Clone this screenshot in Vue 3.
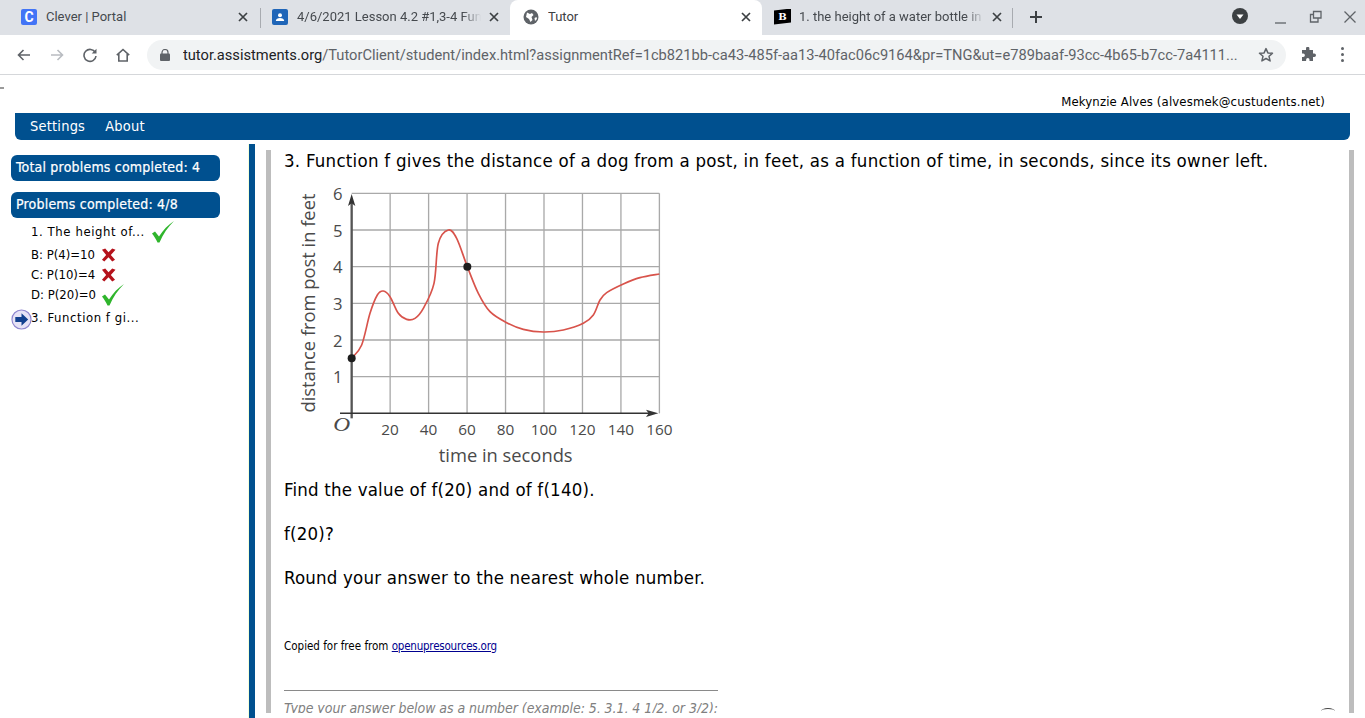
<script setup>
const curvePts = [[185,535],[215,495],[240,400],[262,345],[280,333],[300,350],[325,400],[350,418],[375,415],[400,385],[432,310],[445,190],[475,150],[500,175],[532,260],[565,340],[600,395],[650,428],[700,448],[760,456],[820,450],[880,430],[910,405],[930,360],[950,338],[1000,312],[1050,293],[1108,282]]
function smooth(p) {
  let d = `M${p[0][0]} ${p[0][1]}`
  for (let i = 0; i < p.length - 1; i++) {
    const a = p[Math.max(i - 1, 0)], b = p[i], c = p[i + 1], e = p[Math.min(i + 2, p.length - 1)]
    d += ` C${b[0] + (c[0] - a[0]) / 6} ${b[1] + (c[1] - a[1]) / 6} ${c[0] - (e[0] - b[0]) / 6} ${c[1] - (e[1] - b[1]) / 6} ${c[0]} ${c[1]}`
  }
  return d
}
const curve = smooth(curvePts)
const xLines = [1,2,3,4,5,6,7,8].map(i => 185 + i * 115.4)
const yLines = [0,1,2,3,4,5].map(i => 40 + i * 110)
const xLabels = [20,40,60,80,100,120,140,160]
const problems = [
  { text: '1. The height of...', mark: 'ok', cls: 'first' },
  { text: 'B: P(4)=10', mark: 'no' },
  { text: 'C: P(10)=4', mark: 'no' },
  { text: 'D: P(20)=0', mark: 'ok' },
]
</script>

<template>
  <div class="screen">
    <div class="tabstrip">
      <div class="tab t1">
        <span class="fav clever">C</span><span class="title">Clever | Portal</span>
        <svg class="x" viewBox="0 0 10 10"><path d="M1 1L9 9M9 1L1 9"/></svg>
      </div>
      <i class="sep"></i>
      <div class="tab t2">
        <svg class="favsvg" viewBox="0 0 16 16"><rect width="16" height="16" rx="2" fill="#1f65b8"/><circle cx="8" cy="6.2" r="2" fill="#fff"/><path d="M3.8 12c0-2 2-3 4.2-3s4.200 1 4.200 3z" fill="#fff"/></svg>
        <span class="title fade">4/6/2021 Lesson 4.2 #1,3-4 Func</span>
        <svg class="x" viewBox="0 0 10 10"><path d="M1 1L9 9M9 1L1 9"/></svg>
      </div>
      <div class="tab active">
        <svg class="favsvg" viewBox="0 0 16 16"><circle cx="8" cy="8" r="7.500" fill="#5f6368"/><path d="M4 3.500l3 1.500 2-1 1.500 2-2 2 1 3-2 2-1.500-3-3-2zM11.500 9l2-1 .5 2-2 2z" fill="#fff"/></svg>
        <span class="title">Tutor</span>
        <svg class="x" viewBox="0 0 10 10"><path d="M1 1L9 9M9 1L1 9"/></svg>
      </div>
      <div class="tab t4">
        <span class="fav brainly">B</span>
        <span class="title fade">1. the height of a water bottle in a</span>
        <svg class="x" viewBox="0 0 10 10"><path d="M1 1L9 9M9 1L1 9"/></svg>
      </div>
      <i class="sep"></i>
      <svg class="plus" viewBox="0 0 14 14"><path d="M7 1V13M1 7H13"/></svg>
      <div class="spring"></div>
      <svg class="circle-down" viewBox="0 0 16 16"><circle cx="8" cy="8" r="8" fill="#3c4043"/><path d="M4.500 6.500h7L8 11z" fill="#fff"/></svg>
      <svg class="winbtn min" viewBox="0 0 14 14"><path d="M1 12H12"/></svg>
      <svg class="winbtn" viewBox="0 0 14 14"><path d="M4.500 1.500H12V8H4.500zM4.500 4.500H1.500V12H9V8"/></svg>
      <svg class="winbtn last" viewBox="0 0 14 14"><path d="M1.500 1.500L12.500 12.500M12.500 1.500L1.500 12.500"/></svg>
    </div>

    <div class="toolbar">
      <svg class="navbtn" viewBox="0 0 16 16"><path d="M14 8H2.500M7.500 3L2.500 8L7.500 13"/></svg>
      <svg class="navbtn dim" viewBox="0 0 16 16"><path d="M2 8H13.500M8.500 3L13.500 8L8.500 13"/></svg>
      <svg class="navbtn" viewBox="0 0 16 16"><path d="M13.300 5.500A6 6 0 1 0 14 9"/><path class="fill" d="M14.500 1.800V6.600H9.700z"/></svg>
      <svg class="navbtn" viewBox="0 0 16 16"><path d="M1.800 8.200L8 2.500L14.200 8.200M3.800 7V14H12.200V7"/></svg>
      <div class="omnibox">
        <svg class="lock" viewBox="0 0 10 12"><path d="M2 5V3.500a3 3 0 0 1 6 0V5" fill="none" stroke="#5f6368" stroke-width="1.200"/><rect y="4.500" width="10" height="7.500" rx="1" fill="#5f6368"/></svg>
        <span class="url"><b>tutor.assistments.org</b>/TutorClient/student/index.html?assignmentRef=1cb821bb-ca43-485f-aa13-40fac06c9164&amp;pr=TNG&amp;ut=e789baaf-93cc-4b65-b7cc-7a4111...</span>
        <svg class="star" viewBox="0 0 16 16"><path d="M8 1.600l1.900 4.300 4.600.4-3.500 3 1.100 4.600L8 11.500l-4.100 2.400L5 9.300l-3.500-3 4.600-.4z"/></svg>
      </div>
      <svg class="puzzle" viewBox="0 0 16 16"><path d="M6 1.500a1.700 1.700 0 0 1 3.400 0V3H13v3.600h1.300a1.700 1.700 0 0 1 0 3.400H13v4H9.500v-1.300a1.700 1.700 0 0 0-3.400 0V14H2v-4h1.200a1.700 1.700 0 0 0 0-3.400H2V3h4z" fill="#5f6368"/></svg>
      <div class="dots"><i></i><i></i><i></i></div>
    </div>

    <div class="page">
      <i class="tick"></i>
      <div class="user">Mekynzie Alves (alvesmek@custudents.net)</div>
      <div class="nav"><span>Settings</span><span>About</span></div>

      <div class="main">
        <aside class="side">
          <div class="pill">Total problems completed: 4</div>
          <div class="pill second">Problems completed: 4/8</div>
          <ul class="plist">
            <li v-for="p in problems" :key="p.text" :class="p.cls">
              <span>{{ p.text }}</span>
              <svg v-if="p.mark === 'ok'" class="ok" viewBox="0 0 24 22"><path d="M1 12.500L4 10.500L8 15.500C12 9 17 4 23 0C17 6 12 13 8.500 21.500H6.500C5 18 3 15 1 12.500z" fill="#2fb52c"/></svg>
              <svg v-else class="no" viewBox="0 0 16 15"><path d="M1 2L4.500 .500L8 4.500L12 .500L15.500 2L10.500 7.500L15 12.500L12 14.500L8 10L3.500 14.500L1 12.500L5.500 7.500z" fill="#b5121b"/></svg>
            </li>
            <li class="current">
              <svg class="arrow" viewBox="0 0 22 22"><circle cx="11" cy="11" r="10" fill="#e6e2f6" stroke="#8f86cf" stroke-width="1.200"/><path d="M4.500 8.500H11V4.500L18 11L11 17.500V13.500H4.500z" fill="#12408f"/></svg>
              <span>3. Function f gi...</span>
            </li>
          </ul>
        </aside>

        <div class="stripe"></div>

        <div class="content">
          <div class="inner">
            <p class="q">3. Function f gives the distance of a dog from a post, in feet, as a function of time, in seconds, since its owner left.</p>
            <svg class="graph" viewBox="0 0 1200 870">
              <g class="grid">
                <line v-for="x in xLines" :key="x" :x1="x" :x2="x" y1="40" y2="700"/>
                <line v-for="y in yLines" :key="y" x1="185" x2="1108" :y1="y" :y2="y"/>
              </g>
              <path class="axis-y" d="M185 715V60"/>
              <path class="head" d="M185 42L196 78L185 70L174 78z"/>
              <path class="axis-x" d="M150 700H1085"/>
              <path class="head" d="M1105 700L1068 689L1076 700L1068 711z"/>
              <path class="curve" :d="curve"/>
              <circle cx="185" cy="535" r="12" fill="#1d1d1d"/>
              <circle cx="532" cy="260" r="12" fill="#1d1d1d"/>
              <g class="ylab">
                <text v-for="n in [6,5,4,3,2,1]" :key="n" x="143" :y="(6 - n) * 110 + 60">{{ n }}</text>
              </g>
              <text class="origin" transform="translate(130 754) scale(1.300 1)">O</text>
              <g class="xlab">
                <text v-for="(n, i) in xLabels" :key="n" :x="185 + (i + 1) * 115.4" y="765">{{ n }}</text>
              </g>
              <text class="xtitle" x="647" y="846">time in seconds</text>
              <text class="ytitle" transform="translate(76 369) rotate(-90)">distance from post in feet</text>
            </svg>
            <p class="t find">Find the value of f(20) and of f(140).</p>
            <p class="t fq">f(20)?</p>
            <p class="t round">Round your answer to the nearest whole number.</p>
            <p class="copied">Copied for free from <a href="#">openupresources.org</a></p>
            <div class="rule"></div>
            <p class="hint">Type your answer below as a number (example: 5, 3.1, 4 1/2, or 3/2):</p>
          </div>
          <div class="rightbar"></div>
          <i class="arc"></i>
        </div>
      </div>
    </div>
  </div>
</template>

<style>
html, body { margin: 0; height: 100%; overflow: hidden; background: #fff; }
</style>

<style scoped>
.screen { width: 1365px; height: 718px; overflow: hidden; display: flex; flex-direction: column; font-family: "DejaVu Sans", sans-serif; font-stretch: condensed; color: #000; }
.tabstrip { height: 35px; background: #dee1e6; display: flex; align-items: center; font-family: Roboto, sans-serif; font-stretch: normal; flex: none; }
.tab { height: 35px; display: flex; align-items: center; box-sizing: border-box; font-size: 13px; color: #45494e; flex: none; padding-bottom: 2px; }
.t1 { width: 260px; padding-left: 21px; padding-right: 12px; }
.t2 { width: 249px; padding-left: 11px; padding-right: 11px; }
.active { width: 252px; padding-left: 13px; padding-right: 11px; background: #fff; border-radius: 8px 8px 0 0; color: #3c4043; }
.t4 { width: 250px; padding-left: 12px; padding-right: 10px; }
.sep { width: 1px; height: 20px; background: #a8abb0; flex: none; }
.fav { width: 16px; height: 16px; flex: none; display: flex; align-items: center; justify-content: center; font-weight: 700; color: #fff; }
.clever { background: #4274f6; border-radius: 2px; font-size: 14px; }
.brainly { background: #000; font-size: 10px; font-family: "DejaVu Serif", serif; width: 17px; clip-path: polygon(0 12%, 100% 0, 100% 88%, 0 100%); }
.favsvg { width: 16px; height: 16px; flex: none; }
.title { margin-left: 9px; flex: 1; white-space: nowrap; overflow: hidden; min-width: 0; }
.t4 .title { margin-left: 8px; }
.fade { -webkit-mask-image: linear-gradient(to right, #000 90%, transparent 100%); mask-image: linear-gradient(to right, #000 90%, transparent 100%); }
.x { width: 10px; height: 10px; flex: none; margin-left: 8px; }
.x path { stroke: #3c4043; stroke-width: 1.700; fill: none; }
.plus { width: 14px; height: 14px; margin-left: 16px; flex: none; margin-bottom: 2px; }
.plus path { stroke: #3c4043; stroke-width: 2; fill: none; }
.spring { flex: 1; }
.circle-down { width: 16px; height: 16px; margin-right: 25px; flex: none; margin-bottom: 3px; }
.winbtn { width: 14px; height: 14px; margin-right: 20px; flex: none; margin-bottom: 2px; }
.winbtn.last { margin-right: 8px; }
.winbtn.min { margin-left: 1px; margin-right: 21px; margin-top: 2px; }
.winbtn path { stroke: #5f6368; stroke-width: 1.300; fill: none; }
.toolbar { height: 39px; border-bottom: 1px solid #d5d7da; background: #fff; flex: none; display: flex; align-items: center; padding-left: 15.500px; box-sizing: content-box; font-family: Roboto, sans-serif; font-stretch: normal; }
.navbtn { width: 16px; height: 16px; margin-right: 17px; flex: none; }
.navbtn path { stroke: #5f6368; stroke-width: 1.600; fill: none; }
.navbtn path.fill { fill: #5f6368; stroke: none; }
.navbtn.dim path { stroke: #b9bcc1; }
.omnibox { width: 1139px; height: 30px; margin-left: -0.500px; background: #f1f3f4; border-radius: 15px; display: flex; align-items: center; flex: none; padding-left: 13px; box-sizing: border-box; }
.lock { width: 10px; height: 12px; flex: none; }
.url { margin-left: 13px; font-size: 14.660px; color: #5f6368; white-space: nowrap; width: 1057px; overflow: hidden; flex: none; }
.url b { font-weight: 400; color: #202124; }
.star { width: 16px; height: 16px; margin-left: 18px; flex: none; }
.star path { stroke: #5f6368; stroke-width: 1.500; fill: none; stroke-linejoin: round; }
.puzzle { width: 16px; height: 16px; margin-left: 14px; flex: none; }
.dots { margin-left: 25px; display: flex; flex-direction: column; gap: 3px; }
.dots i { width: 3px; height: 3px; border-radius: 50%; background: #5f6368; }

.page { flex: 1; position: relative; min-height: 0; display: flex; flex-direction: column; }
.tick { position: absolute; left: 0; top: 12px; width: 4px; height: 2px; background: #9a9a9a; }
.user { height: 38px; box-sizing: border-box; padding: 18px 40px 0 0; text-align: right; font-size: 13px; line-height: 17px; flex: none; letter-spacing: .15px; }
.nav { height: 27px; margin: 0 15px; background: #00508f; border-radius: 0 0 6px 6px; color: #fff; display: flex; gap: 20px; padding: 0 0 2px 15px; box-sizing: border-box; align-items: center; font-size: 14.500px; flex: none; letter-spacing: .2px; }
.main { display: flex; flex: 1; min-height: 0; margin-top: 4px; }
.side { width: 249px; flex: none; padding: 11px 0 0 11px; box-sizing: border-box; font-size: 13px; }
.pill { width: 209px; height: 26px; background: #00508f; color: #fff; border-radius: 6px; font-size: 14px; line-height: 25px; padding-left: 5px; box-sizing: border-box; letter-spacing: .2px; -webkit-text-stroke: .2px #fff; }
.pill.second { margin-top: 11px; }
.plist { list-style: none; margin: 0; padding: 0 0 0 20px; position: relative; font-size: 13px; }
.plist li { display: flex; align-items: center; height: 20px; line-height: 20px; }
.plist li.first { height: 27px; letter-spacing: .58px; }
.plist li.current { height: 24px; margin-top: 1px; letter-spacing: .55px; }
.ok { width: 24px; height: 22px; margin-left: 5px; flex: none; }
.first .ok { margin-left: 6px; }
.no { width: 15px; height: 14px; margin-left: 6px; flex: none; }
.arrow { position: absolute; left: 0; width: 21px; height: 21px; bottom: 0; }
.stripe { width: 6px; background: #00508f; border-left: 1px solid #f4ffd8; flex: none; margin-left: -1px; }
.content { flex: 1; min-width: 0; display: flex; position: relative; padding-left: 11px; padding-top: 6px; height: 569px; box-sizing: border-box; }
.inner { flex: 1; min-width: 0; border-left: 5px solid #bdbdbd; padding-left: 13px; overflow: hidden; height: 563px; }
.rightbar { width: 5px; background: #bdbdbd; height: 563px; margin-right: 11px; flex: none; }
.arc { position: absolute; right: 30px; bottom: -1px; width: 14px; height: 5px; border-top: 1px solid #444; border-radius: 50%; }
p { margin: 0; }
.q { font-size: 18.500px; line-height: 22px; white-space: nowrap; letter-spacing: .26px; }
.graph { display: block; width: 400px; height: 290px; margin: 8px 0 0 6px; }
.grid line { stroke: #a9a9a9; stroke-width: 4; }
.axis-y { stroke: #555; stroke-width: 7; fill: none; }
.axis-x { stroke: #333; stroke-width: 4.500; fill: none; }
.head { fill: #333; }
.curve { stroke: #d8534b; stroke-width: 5; fill: none; stroke-linejoin: round; }
svg text { fill: #4a4a4a; font-family: "Open Sans", sans-serif; font-stretch: normal; }
.ylab text { font-size: 50px; text-anchor: middle; }
.xlab text { font-size: 46px; text-anchor: middle; }
.origin { font-size: 54px; font-style: italic; font-family: "Liberation Serif", serif; }
.xtitle { font-size: 55px; text-anchor: middle; }
.ytitle { font-size: 55px; text-anchor: middle; }
.t { font-size: 18.500px; line-height: 22px; letter-spacing: .2px; }
.find { margin-top: 9px; }
.fq { margin-top: 22px; }
.round { margin-top: 22px; }
.copied { font-size: 11.500px; line-height: 14px; margin-top: 50px; }
.copied a { color: #00008f; text-decoration: underline; letter-spacing: -.22px; }
.rule { width: 434px; height: 1px; background: #8a8a8a; margin-top: 37px; }
.hint { margin-top: 8px; font-style: italic; color: #808080; font-size: 14px; line-height: 18px; white-space: nowrap; letter-spacing: -.06px; }
</style>
